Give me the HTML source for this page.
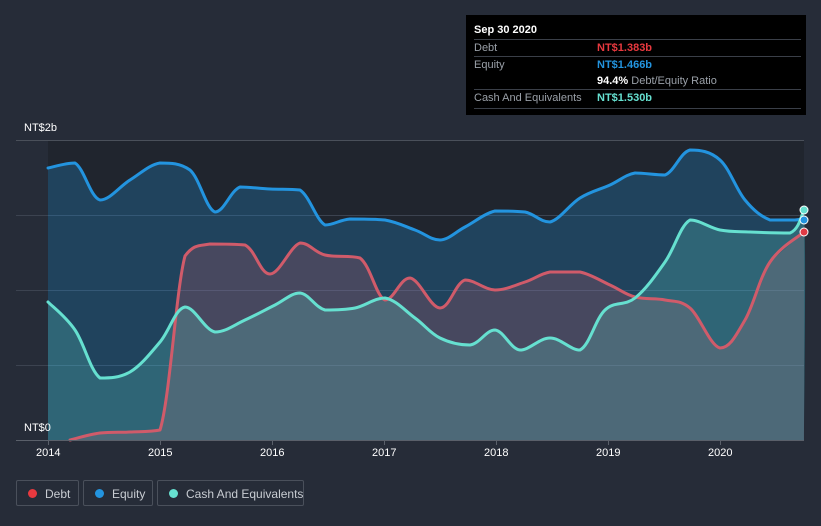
<!DOCTYPE html>
<html><head><style>
body{margin:0;background:#262c38;width:821px;height:526px;overflow:hidden;font-family:"Liberation Sans",sans-serif;}
.tt{position:absolute;left:466px;top:15px;width:340px;height:100px;background:#000;color:#fff;font-size:11px;}
.tt .r{position:absolute;left:8px;width:327px;border-top:1px solid #3a3f48;height:16px;line-height:16px;color:#9aa0a8;}
.tt b{font-weight:bold}
.leg{position:absolute;top:480px;height:26px;border:1px solid #4a505b;border-radius:2px;color:#c8ccd2;font-size:12px;line-height:26px;box-sizing:border-box;white-space:nowrap;}
.leg i{position:absolute;left:11px;top:8px;width:9px;height:9px;border-radius:50%;}
.leg span{position:absolute;left:28px;}
.ax{position:absolute;color:#fff;font-size:11px;}
</style></head><body>
<svg width="821" height="526" style="position:absolute;left:0;top:0">
<rect x="48" y="140" width="756" height="300" fill="#20252e"/>
<g stroke="#3c4350" stroke-width="1"><line x1="16" y1="140.5" x2="804" y2="140.5" stroke="#4a505a"/><line x1="16" y1="215.5" x2="804" y2="215.5"/><line x1="16" y1="290.5" x2="804" y2="290.5"/><line x1="16" y1="365.5" x2="804" y2="365.5"/></g>
<polygon class="sm" fill="#2394df" fill-opacity="0.27" points="48,168 75,163 100,200 130,180 160,163 190,170 215,212 240,187 270,189 300,190 325,225 350,219 385,220 415,230 440,240 465,227 495,211 525,212 550,222 580,198 610,185 635,173 665,175 690,150 720,160 745,200 770,220 795,220 804,218 804,440 48,440"/>
<polygon class="sm" fill="#d05b6a" fill-opacity="0.22" points="70,440 100,433 130,432 160,430 185,256 210,244 245,245 270,274 300,243 325,255 360,258 385,300 410,278 440,308 465,280 495,290 525,282 550,272 580,272 610,285 635,297 665,300 690,308 720,348 745,320 770,262 804,232 804,440"/>
<polygon class="sm" fill="#66e0d0" fill-opacity="0.22" points="48,302 75,330 100,378 130,372 160,342 185,307 215,332 245,320 275,305 300,293 325,310 355,308 385,298 415,318 440,338 470,345 495,330 520,350 550,338 580,350 605,310 635,298 665,262 690,220 720,230 750,232 790,233 804,210 804,440 48,440"/>
<g fill="none" stroke-width="3" stroke-linejoin="round" stroke-linecap="round">
<polyline class="sm" stroke="#2394df" points="48,168 75,163 100,200 130,180 160,163 190,170 215,212 240,187 270,189 300,190 325,225 350,219 385,220 415,230 440,240 465,227 495,211 525,212 550,222 580,198 610,185 635,173 665,175 690,150 720,160 745,200 770,220 795,220 804,218"/>
<polyline class="sm" stroke="#d05b6a" points="70,440 100,433 130,432 160,430 185,256 210,244 245,245 270,274 300,243 325,255 360,258 385,300 410,278 440,308 465,280 495,290 525,282 550,272 580,272 610,285 635,297 665,300 690,308 720,348 745,320 770,262 804,232"/>
<polyline class="sm" stroke="#66e0d0" points="48,302 75,330 100,378 130,372 160,342 185,307 215,332 245,320 275,305 300,293 325,310 355,308 385,298 415,318 440,338 470,345 495,330 520,350 550,338 580,350 605,310 635,298 665,262 690,220 720,230 750,232 790,233 804,210"/>
</g>
<line x1="16" y1="440.5" x2="804" y2="440.5" stroke="#5a606a"/>
<g stroke="#5a606a"><line x1="48.5" y1="440" x2="48.5" y2="445"/><line x1="160.5" y1="440" x2="160.5" y2="445"/><line x1="272.5" y1="440" x2="272.5" y2="445"/><line x1="384.5" y1="440" x2="384.5" y2="445"/><line x1="496.5" y1="440" x2="496.5" y2="445"/><line x1="608.5" y1="440" x2="608.5" y2="445"/><line x1="720.5" y1="440" x2="720.5" y2="445"/></g>
<circle cx="804" cy="210" r="4" fill="#66e0d0" stroke="#fff" stroke-width="1"/>
<circle cx="804" cy="220" r="4" fill="#2394df" stroke="#fff" stroke-width="1"/>
<circle cx="804" cy="232" r="4" fill="#e03a45" stroke="#fff" stroke-width="1"/>
</svg>
<script>
(function(){
var NS="http://www.w3.org/2000/svg";
function cl(v,a,b){var lo=Math.min(a,b),hi=Math.max(a,b);return Math.max(lo,Math.min(hi,v));}
document.querySelectorAll(".sm").forEach(function(el){
 var pts=el.getAttribute("points").trim().split(/\s+/).map(function(s){var a=s.split(",");return [+a[0],+a[1]];});
 var isPoly=el.tagName.toLowerCase()==="polygon";
 var line=pts, tail=[];
 if(isPoly){ line=pts.slice(0,pts.length-(pts[0][1]===440?2:1)); tail=pts.slice(line.length); }
 var d="M"+line[0][0]+","+line[0][1];
 for(var i=0;i<line.length-1;i++){
  var p0=line[i-1]||line[i],p1=line[i],p2=line[i+1],p3=line[i+2]||p2,t=0.18;
  var c1=[p1[0]+(p2[0]-p0[0])*t,cl(p1[1]+(p2[1]-p0[1])*t,p1[1],p2[1])];
  var c2=[p2[0]-(p3[0]-p1[0])*t,cl(p2[1]-(p3[1]-p1[1])*t,p1[1],p2[1])];
  d+=" C"+c1[0].toFixed(1)+","+c1[1].toFixed(1)+" "+c2[0].toFixed(1)+","+c2[1].toFixed(1)+" "+p2[0]+","+p2[1];
 }
 tail.forEach(function(p){d+=" L"+p[0]+","+p[1];});
 if(isPoly)d+=" Z";
 var p=document.createElementNS(NS,"path");
 for(var k=0;k<el.attributes.length;k++){var a=el.attributes[k];if(a.name!=="points"&&a.name!=="class")p.setAttribute(a.name,a.value);}
 p.setAttribute("d",d);
 el.parentNode.replaceChild(p,el);
});
})();
</script>
<div class="ax" style="left:24px;top:122px">NT$2b</div>
<div class="ax" style="left:24px;top:422px">NT$0</div>
<div class="ax" style="left:36px;top:447px">2014</div>
<div class="ax" style="left:148px;top:447px">2015</div>
<div class="ax" style="left:260px;top:447px">2016</div>
<div class="ax" style="left:372px;top:447px">2017</div>
<div class="ax" style="left:484px;top:447px">2018</div>
<div class="ax" style="left:596px;top:447px">2019</div>
<div class="ax" style="left:708px;top:447px">2020</div>
<div class="tt">
<div style="position:absolute;left:8px;top:9px;font-weight:bold;">Sep 30 2020</div>
<div class="r" style="top:24px">Debt<b style="position:absolute;left:123px;color:#e8393f">NT$1.383b</b></div>
<div class="r" style="top:41px">Equity<b style="position:absolute;left:123px;color:#2394df">NT$1.466b</b></div>
<div class="r" style="top:58px;border-top:none"><span style="position:absolute;left:123px"><b style="color:#fff">94.4%</b> Debt/Equity Ratio</span></div>
<div class="r" style="top:74px;height:18px;border-bottom:1px solid #3a3f48">Cash And Equivalents<b style="position:absolute;left:123px;color:#66e0d0">NT$1.530b</b></div>
</div>
<div class="leg" style="left:16px;width:63px"><i style="background:#e8393f"></i><span>Debt</span></div>
<div class="leg" style="left:83px;width:70px"><i style="background:#2394df"></i><span>Equity</span></div>
<div class="leg" style="left:157px;width:147px"><i style="background:#66e0d0"></i><span>Cash And Equivalents</span></div>
</body></html>
